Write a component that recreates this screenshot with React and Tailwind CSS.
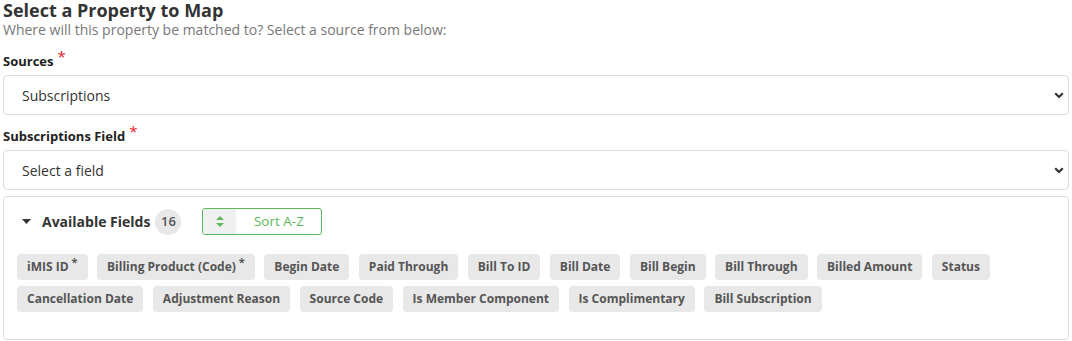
// App.jsx
const fields = [
  { name: 'iMIS ID', req: true },
  { name: 'Billing Product (Code)', req: true },
  { name: 'Begin Date' },
  { name: 'Paid Through' },
  { name: 'Bill To ID' },
  { name: 'Bill Date' },
  { name: 'Bill Begin' },
  { name: 'Bill Through' },
  { name: 'Billed Amount' },
  { name: 'Status' },
  { name: 'Cancellation Date' },
  { name: 'Adjustment Reason' },
  { name: 'Source Code' },
  { name: 'Is Member Component' },
  { name: 'Is Complimentary' },
  { name: 'Bill Subscription' },
];

function Chevron() {
  return (
    <svg width="10" height="7" viewBox="0 0 10 7" className="absolute right-[5px] top-[17px] pointer-events-none">
      <path d="M1.2 1.2 L5 5 L8.8 1.2" fill="none" stroke="#333" strokeWidth="2.2" />
    </svg>
  );
}

function SelectBox({ value }) {
  return (
    <div className="relative">
      <select
        className="w-full h-[40px] appearance-none bg-white border border-[#dcdcdc] rounded-[4px] pl-[18px] text-[14px] text-[#333] outline-none"
        defaultValue={value}
      >
        <option>{value}</option>
      </select>
      <Chevron />
    </div>
  );
}

function Label({ children, className = '' }) {
  return (
    <label className={`block text-[13px] font-bold leading-[18px] text-[#222] ${className}`}>
      {children}
      <span className="text-[#e4202a] text-[15px] font-normal relative top-[-4px] ml-[4px]">*</span>
    </label>
  );
}

export default function App() {
  return (
    <div className="bg-white px-[3px] font-['Open_Sans',sans-serif] w-[1072px] h-[341px] overflow-hidden">
      <h2 className="text-[18px] font-bold leading-[21px] text-[#333]">Select a Property to Map</h2>
      <p className="text-[14px] leading-[17px] text-[#777]">
        Where will this property be matched to? Select a source from below:
      </p>

      <Label className="mt-[13px] mb-[5px]">Sources</Label>
      <SelectBox value="Subscriptions" />

      <Label className="mt-[11px] mb-[5px]">Subscriptions Field</Label>
      <SelectBox value="Select a field" />

      {/* AVAILABLE FIELDS PANEL */}
      <div className="mt-[6px] border border-[#dcdcdc] rounded-[4px] h-[144px] pt-[11px] px-[13px]">
        <div className="flex items-center pl-[5px]">
          <svg width="9" height="5" viewBox="0 0 9 5" className="mr-[11px]">
            <path d="M0 0 H9 L4.5 5 Z" fill="#333" />
          </svg>
          <span className="text-[14px] font-bold text-[#333]">Available Fields</span>
          <span className="ml-[5px] w-[26px] h-[26px] rounded-full bg-[#e8e8e8] text-[13px] font-semibold text-[#555] flex items-center justify-center">
            16
          </span>
          <button className="ml-[21px] w-[120px] h-[27px] flex border border-[#5cb85c] rounded-[3px] overflow-hidden">
            <span className="w-[33px] h-full bg-[#f0f0f0] flex items-center justify-center">
              <svg width="8" height="11" viewBox="0 0 8 11">
                <path d="M4 0 L8 4 H0 Z M0 7 H8 L4 11 Z" fill="#5cb85c" />
              </svg>
            </span>
            <span className="flex-1 h-full flex items-center justify-center text-[13.5px] text-[#5cb85c]">Sort A-Z</span>
          </button>
        </div>

        <div className="mt-[19px] flex flex-wrap gap-x-[9.5px] gap-y-[6px]">
          {fields.map((f) => (
            <span
              key={f.name}
              className="h-[26px] px-[10px] rounded-[4px] bg-[#e8e8e8] text-[12px] font-bold text-[#555] flex items-center"
            >
              {f.name}
              {f.req && <span className="text-[11px] relative top-[-5px] ml-[3px]">*</span>}
            </span>
          ))}
        </div>
      </div>
    </div>
  );
}
